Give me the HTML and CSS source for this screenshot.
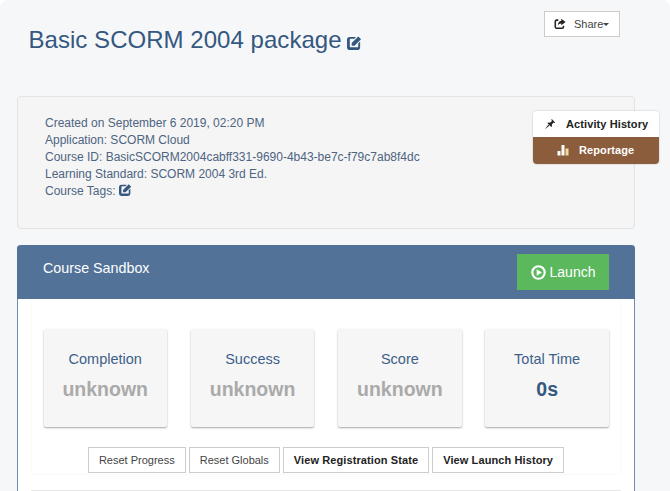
FILE: index.html
```html
<!DOCTYPE html>
<html lang="en">
<head>
<meta charset="utf-8">
<title>Basic SCORM 2004 package</title>
<link rel="stylesheet" href="styles.css">
</head>
<body>
<div class="page">
  <header class="top">
    <h1 class="title">Basic SCORM 2004 package
      <svg class="edit-lg" viewBox="0 0 16 16"><path fill-rule="evenodd" d="M3 2h6.500L8 4H3.500A.5.500 0 0 0 3 4.500v8a.5.500 0 0 0 .5.500h8a.5.500 0 0 0 .5-.5V9l2-2v6a3 3 0 0 1-3 3H3a3 3 0 0 1-3-3V5a3 3 0 0 1 3-3z" fill="currentColor"/><path d="M5 11.500V8.500l7-7 3 3-7 7z" fill="currentColor"/></svg>
    </h1>
    <button class="share">
      <svg class="share-ico" viewBox="0 0 14 14"><path d="M5 2.500H3A1.500 1.500 0 0 0 1.500 4v6.500A1.500 1.500 0 0 0 3 12h6.500A1.500 1.500 0 0 0 11 10.500V9" fill="none" stroke="currentColor" stroke-width="1.800"/><path d="M8.500 1l5 3.800-5 3.800V6.500C6.500 6.500 5 7.300 4.500 9.500 4.200 6 6 3.500 8.500 3.200z" fill="currentColor"/></svg>
      <span class="share-text">Share</span><span class="caret"></span>
    </button>
  </header>

  <section class="well">
    <div class="meta">
      <div>Created on September 6 2019, 02:20 PM</div>
      <div>Application: SCORM Cloud</div>
      <div>Course ID: BasicSCORM2004cabff331-9690-4b43-be7c-f79c7ab8f4dc</div>
      <div>Learning Standard: SCORM 2004 3rd Ed.</div>
      <div>Course Tags:
        <svg class="edit-sm" viewBox="0 0 16 16"><path fill-rule="evenodd" d="M3 2h6.500L8 4H3.500A.5.500 0 0 0 3 4.500v8a.5.500 0 0 0 .5.500h8a.5.500 0 0 0 .5-.5V9l2-2v6a3 3 0 0 1-3 3H3a3 3 0 0 1-3-3V5a3 3 0 0 1 3-3z" fill="currentColor"/><path d="M5 11.500V8.500l7-7 3 3-7 7z" fill="currentColor"/></svg>
      </div>
    </div>
    <div class="side">
      <a class="side-btn side-light">
        <svg class="pin" viewBox="0 0 14 14"><path d="M1 13l4-5.200 1.200 1.200z" fill="currentColor"/><path d="M8.800 1l4.200 4.200-1 .5-.9-.5-2 2.300.2 2.200-.8.8L4 6l.8-.8 2.200.2 2.300-2-.5-.9z" fill="currentColor"/></svg>
        Activity History
      </a>
      <a class="side-btn side-brown">
        <svg class="bars" viewBox="0 0 12 12"><rect x="0.500" y="7" width="3" height="4.500" fill="currentColor"/><rect x="4.500" y="1" width="3" height="10.500" fill="currentColor"/><rect x="8.500" y="4.500" width="3" height="7" fill="#f3d9a0"/></svg>
        Reportage
      </a>
    </div>
  </section>

  <section class="panel">
    <div class="panel-head">
      <h2 class="panel-title">Course Sandbox</h2>
      <button class="launch">
        <svg class="play" viewBox="0 0 14 14"><circle cx="7" cy="7" r="5.800" fill="none" stroke="currentColor" stroke-width="2"/><path d="M5.300 4L10.200 7l-4.900 3z" fill="currentColor"/></svg>
        Launch
      </button>
    </div>
    <div class="panel-body">
      <div class="inner">
        <div class="stats">
          <div class="stat"><div class="stat-label">Completion</div><div class="stat-value">unknown</div></div>
          <div class="stat"><div class="stat-label">Success</div><div class="stat-value">unknown</div></div>
          <div class="stat"><div class="stat-label">Score</div><div class="stat-value">unknown</div></div>
          <div class="stat"><div class="stat-label">Total Time</div><div class="stat-value stat-strong">0s</div></div>
        </div>
        <div class="actions">
          <button class="act">Reset Progress</button>
          <button class="act">Reset Globals</button>
          <button class="act act-bold">View Registration State</button>
          <button class="act act-bold">View Launch History</button>
        </div>
      </div>
      <div class="next"></div>
    </div>
  </section>
</div>
</body>
</html>
```

FILE: styles.css
```css
* { box-sizing: border-box; }
html, body { margin: 0; height: 100%; overflow: hidden; background: #fff; }
body { font-family: "Liberation Sans", Arial, sans-serif; }
.page {
  width: 670px;
  height: 491px;
  background: #f6f7f9;
  border-radius: 8px 8px 0 0;
  padding: 11px 0 0 17px;
  overflow: hidden;
}
.top {
  display: flex;
  justify-content: space-between;
  align-items: flex-start;
  width: 603px;
  height: 85px;
}
.title {
  margin: 12px 0 0 11.500px;
  font-size: 24px;
  line-height: 33px;
  font-weight: 400;
  letter-spacing: .04px;
  color: #34587f;
}
.edit-lg { width: 15px; height: 15px; margin-left: -1px; vertical-align: -2px; color: #34587f; }
.share {
  display: flex;
  align-items: center;
  width: 76px;
  height: 26px;
  padding: 0 0 0 9px;
  background: #fff;
  border: 1px solid #ccc;
  font: 11px "Liberation Sans", Arial, sans-serif;
  color: #444;
}
.share-ico { width: 12px; height: 12px; color: #222; margin-right: 8px; }
.caret {
  border-top: 3px solid #444;
  border-left: 3px solid transparent;
  border-right: 3px solid transparent;
}
.well {
  display: flex;
  justify-content: space-between;
  align-items: flex-start;
  width: 618px;
  height: 133px;
  padding: 14px 0 0 27px;
  background: #f5f5f5;
  border: 1px solid #e3e3e3;
  border-radius: 4px;
}
.meta { margin-top: 4px; font-size: 12px; line-height: 17px; color: #4d6482; }
.edit-sm { width: 13px; height: 13px; vertical-align: -1px; color: #34587f; }
.side {
  width: 126px;
  margin: 0 -25px 0 0;
  border-radius: 4px;
  overflow: hidden;
  box-shadow: 0 0 2px rgba(0, 0, 0, .25);
}
.side-btn {
  display: flex;
  align-items: center;
  height: 26px;
  font-size: 11px;
  letter-spacing: .1px;
  font-weight: 700;
}
.side-light { background: #fff; color: #222; padding-left: 11px; gap: 10px; }
.side-brown { height: 27px; padding: 0 0 2px 24px; background: #8c5d3c; color: #fff; gap: 10px; }
.pin { width: 12px; height: 12px; color: #222; }
.bars { width: 12px; height: 12px; color: #fff; }
.panel {
  width: 618px;
  height: 260px;
  margin-top: 16px;
  border: 1px solid #6f8db0;
  border-top: 0;
  border-radius: 4px 4px 0 0;
  background: #fff;
}
.panel-head {
  display: flex;
  justify-content: space-between;
  align-items: flex-start;
  height: 54px;
  padding: 9px 26px 0 26px;
  margin: 0 -1px;
  background: #527298;
  border-radius: 4px 4px 0 0;
}
.panel-title {
  margin: 4px 0 0;
  font-size: 14.300px;
  line-height: 20px;
  font-weight: 400;
  color: #fff;
}
.launch {
  display: flex;
  align-items: center;
  justify-content: center;
  gap: 4px;
  width: 92px;
  height: 36px;
  background: #5cb85c;
  border: 0;
  color: #fff;
  font: 14px "Liberation Sans", Arial, sans-serif;
}
.play { width: 15px; height: 15px; }
.panel-body { padding: 0 13px; }
.inner {
  height: 176px;
  padding-top: 30px;
  border: 1px solid #fafafa;
  border-top: 0;
  border-radius: 0 0 4px 4px;
}
.stats { display: flex; gap: 23.800px; padding-left: 11.500px; }
.stat {
  width: 123.500px;
  height: 98px;
  padding-top: 22px;
  background: #f6f6f6;
  border-radius: 2px;
  box-shadow: 0 1px 2px rgba(0, 0, 0, .35);
  text-align: center;
}
.stat-label { font-size: 14.500px; line-height: 16px; color: #3d5f8a; }
.stat-value {
  margin-top: 10px;
  font-size: 19.500px;
  line-height: 24px;
  font-weight: 700;
  color: #aaa;
}
.stat-strong { color: #34587f; }
.actions {
  display: flex;
  justify-content: center;
  gap: 3px;
  margin-top: 20px;
}
.act {
  height: 26px;
  padding: 0 10px;
  background: #fff;
  border: 1px solid #ccc;
  font: 11px "Liberation Sans", Arial, sans-serif;
  color: #444;
}
.act-bold { font-weight: 700; letter-spacing: .1px; color: #222; }
.next { height: 1px; margin-top: 15px; background: #e6e6e6; }
```
